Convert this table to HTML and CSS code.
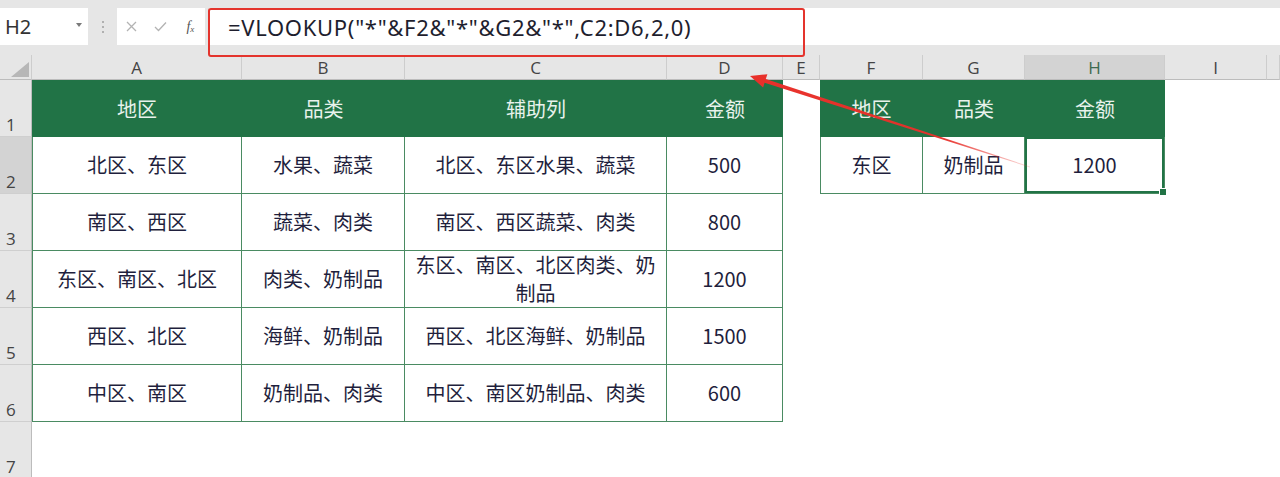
FILE: index.html
```html
<!DOCTYPE html>
<html lang="zh-CN">
<head>
<meta charset="utf-8">
<title>VLOOKUP</title>
<link rel="stylesheet" href="styles.css">
</head>
<body>
<div class="app">
  <div class="toolbar">
    <div class="namebox"><span class="ref">H2</span><span class="caret"></span></div>
    <div class="grip"><span></span><span></span><span></span></div>
    <div class="fxbox">
      <span class="ico"><svg width="11" height="11" viewBox="0 0 11 11"><path d="M1 1 L10 10 M10 1 L1 10" stroke="#b3b3b3" stroke-width="1.3" fill="none"/></svg></span>
      <span class="ico"><svg width="13" height="11" viewBox="0 0 13 11"><path d="M1 6 L4.5 9.5 L12 1.5" stroke="#b3b3b3" stroke-width="1.3" fill="none"/></svg></span>
      <span class="ico fx">f<span class="sub">x</span></span>
    </div>
    <div class="formula">=VLOOKUP("*"&amp;F2&amp;"*"&amp;G2&amp;"*",C2:D6,2,0)</div>
  </div>

  <div class="sheet">
    <div class="ch corner"><svg width="32" height="25" viewBox="0 0 32 25"><polygon points="11,22 29,22 29,7" fill="#b7b7b7"/></svg></div>
    <div class="ch">A</div>
    <div class="ch">B</div>
    <div class="ch">C</div>
    <div class="ch">D</div>
    <div class="ch">E</div>
    <div class="ch">F</div>
    <div class="ch">G</div>
    <div class="ch sel">H</div>
    <div class="ch">I</div>
    <div class="ch"></div>

    <div class="rh">1</div>
    <div class="th">地区</div>
    <div class="th">品类</div>
    <div class="th">辅助列</div>
    <div class="th">金额</div>
    <div class="e"></div>
    <div class="th">地区</div>
    <div class="th">品类</div>
    <div class="th">金额</div>
    <div class="e"></div>
    <div class="e"></div>

    <div class="rh sel">2</div>
    <div class="td first">北区、东区</div>
    <div class="td">水果、蔬菜</div>
    <div class="td">北区、东区水果、蔬菜</div>
    <div class="td">500</div>
    <div class="e"></div>
    <div class="td first">东区</div>
    <div class="td">奶制品</div>
    <div class="td active">1200</div>
    <div class="e"></div>
    <div class="e"></div>

    <div class="rh">3</div>
    <div class="td first">南区、西区</div>
    <div class="td">蔬菜、肉类</div>
    <div class="td">南区、西区蔬菜、肉类</div>
    <div class="td">800</div>
    <div class="e"></div><div class="e"></div><div class="e"></div><div class="e"></div><div class="e"></div><div class="e"></div>

    <div class="rh">4</div>
    <div class="td first">东区、南区、北区</div>
    <div class="td">肉类、奶制品</div>
    <div class="td">东区、南区、北区肉类、奶<br>制品</div>
    <div class="td">1200</div>
    <div class="e"></div><div class="e"></div><div class="e"></div><div class="e"></div><div class="e"></div><div class="e"></div>

    <div class="rh">5</div>
    <div class="td first">西区、北区</div>
    <div class="td">海鲜、奶制品</div>
    <div class="td">西区、北区海鲜、奶制品</div>
    <div class="td">1500</div>
    <div class="e"></div><div class="e"></div><div class="e"></div><div class="e"></div><div class="e"></div><div class="e"></div>

    <div class="rh">6</div>
    <div class="td first">中区、南区</div>
    <div class="td">奶制品、肉类</div>
    <div class="td">中区、南区奶制品、肉类</div>
    <div class="td">600</div>
    <div class="e"></div><div class="e"></div><div class="e"></div><div class="e"></div><div class="e"></div><div class="e"></div>

    <div class="rh">7</div>
    <div class="e"></div><div class="e"></div><div class="e"></div><div class="e"></div><div class="e"></div><div class="e"></div><div class="e"></div><div class="e"></div><div class="e"></div><div class="e"></div>
  </div>

  <div class="callout"></div>
  <svg class="arrow" width="1280" height="477" viewBox="0 0 1280 477">
    <defs>
      <linearGradient id="fade" x1="752" y1="77" x2="1030" y2="167" gradientUnits="userSpaceOnUse">
        <stop offset="0" stop-color="#e8302a"/>
        <stop offset="0.7" stop-color="#e8302a" stop-opacity="0.95"/>
        <stop offset="1" stop-color="#e8302a" stop-opacity="0.15"/>
      </linearGradient>
    </defs>
    <polygon points="750,76 767.4,74.2 765.8,79 1030.1,166.6 1029.9,167.4 764.6,82.8 763.1,87.6" fill="url(#fade)"/>
  </svg>
</div>
</body>
</html>
```

FILE: styles.css
```css
* { box-sizing: border-box; }

body {
  margin: 0;
  background: #ffffff;
  font-family: "Noto Sans CJK SC", "Noto Sans", sans-serif;
}

.app {
  position: relative;
  width: 1280px;
  height: 477px;
  overflow: hidden;
  background: #ffffff;
}

/* ---------- formula bar ---------- */
.toolbar {
  display: flex;
  align-items: flex-start;
  height: 55px;
  padding-top: 8px;
  background: #e6e6e6;
}

.namebox {
  width: 88px;
  height: 37px;
  background: #ffffff;
  display: flex;
  align-items: center;
  padding-left: 5px;
  font-family: "Noto Sans", sans-serif;
  font-size: 20px;
  color: #333333;
}

.caret {
  margin-left: auto;
  margin-right: 6px;
  width: 0;
  height: 0;
  border-left: 3.5px solid transparent;
  border-right: 3.5px solid transparent;
  border-top: 4px solid #7a7a7a;
  margin-bottom: 4px;
}

.grip {
  width: 29px;
  height: 37px;
  display: flex;
  flex-direction: column;
  align-items: center;
  justify-content: center;
  gap: 3px;
}

.grip span {
  width: 2px;
  height: 2px;
  background: #b0b0b0;
}

.fxbox {
  width: 88px;
  height: 37px;
  background: #ffffff;
  display: flex;
  align-items: center;
}

.ico {
  width: 31px;
  display: flex;
  align-items: center;
  justify-content: center;
}

.fx {
  font-family: "Liberation Serif", serif;
  font-style: italic;
  font-size: 14px;
  color: #555555;
}

.fx .sub {
  font-size: 9px;
  margin-top: 5px;
}

.formula {
  flex: 1;
  height: 37px;
  margin-left: 3px;
  background: #ffffff;
  border-left: 1px solid #dcdcdc;
  display: flex;
  align-items: center;
  padding-left: 19px;
  font-family: "Noto Sans", sans-serif;
  font-size: 22px;
  letter-spacing: 0.7px;
  color: #1e1e2e;
  white-space: nowrap;
}

/* ---------- sheet ---------- */
.sheet {
  display: grid;
  grid-template-columns: 32px 210px 163px 262px 116px 37px 103px 102px 140px 102px 13px;
  grid-template-rows: 25px repeat(7, 57px);
}

.ch {
  background: #e6e6e6;
  border-right: 1px solid #cdcdcd;
  border-bottom: 1px solid #bcbcbc;
  display: flex;
  align-items: center;
  justify-content: center;
  font-family: "Open Sans", sans-serif;
  font-size: 17px;
  color: #444444;
}

.ch.sel {
  background: #d3d3d3;
  color: #3d6b50;
}

.corner {
  display: block;
}

.corner svg { display: block; }

.rh {
  background: #e6e6e6;
  border-right: 1px solid #bcbcbc;
  border-bottom: 1px solid #cfcfcf;
  display: flex;
  align-items: flex-end;
  padding: 0 0 0 6px;
  font-family: "Open Sans", sans-serif;
  font-size: 17px;
  color: #444444;
}

.rh.sel {
  background: #d3d3d3;
}

.th {
  background: #217346;
  color: #e8f2ec;
  display: flex;
  align-items: center;
  justify-content: center;
  font-size: 20px;
}

.td {
  background: #ffffff;
  border-right: 1px solid #4a8b62;
  border-bottom: 1px solid #4a8b62;
  display: flex;
  align-items: center;
  justify-content: center;
  text-align: center;
  font-size: 20px;
  line-height: 28px;
  color: #1f1f3d;
}

.td.first {
  border-left: 1px solid #4a8b62;
}

.td.active {
  position: relative;
  box-shadow: inset 0 0 0 2px #217346;
}

.td.active::after {
  content: "";
  position: absolute;
  right: -3px;
  bottom: -3px;
  width: 6px;
  height: 6px;
  background: #217346;
  border: 1px solid #ffffff;
}

.e {
  background: #ffffff;
}

/* ---------- annotations ---------- */
.callout {
  position: absolute;
  left: 208px;
  top: 8px;
  width: 597px;
  height: 49px;
  border: 2px solid #e4342d;
  border-radius: 3px;
}

.arrow {
  position: absolute;
  left: 0;
  top: 0;
  pointer-events: none;
}
```
